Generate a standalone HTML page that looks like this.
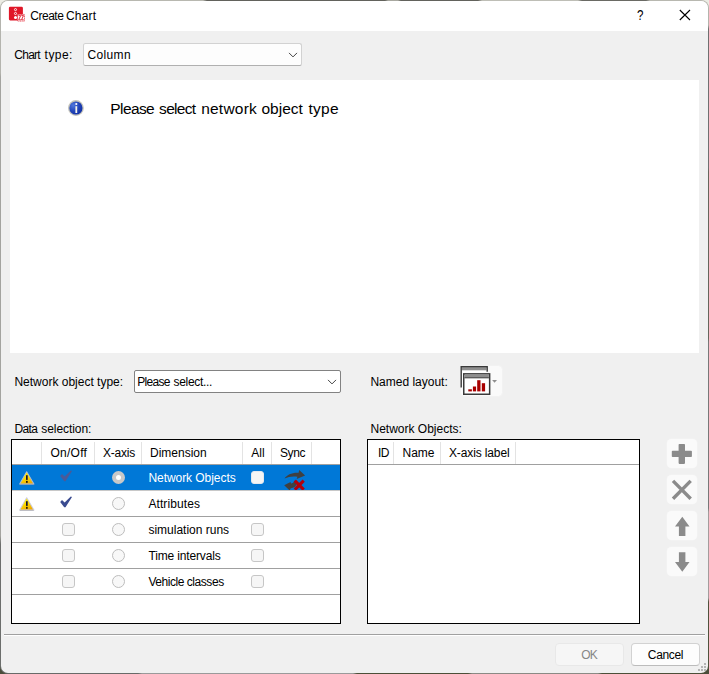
<!DOCTYPE html>
<html lang="en">
<head>
<meta charset="utf-8">
<title>Create Chart</title>
<style>
html,body{margin:0;padding:0;}
body{width:709px;height:674px;overflow:hidden;background:linear-gradient(#ecece4 0,#ecece4 40%,#5a5d52 60%,#4a4d3a 100%);font-family:"Liberation Sans",sans-serif;font-size:12px;color:#000;position:relative;}
.frame{position:absolute;left:0;top:0;width:709px;height:674px;border-radius:8px;overflow:hidden;
background:
linear-gradient(to right,#b8b8b0 0,#b8b8b0 203px,#62625c 207px,#62625c 385px,#a8a8a0 388px,#a8a8a0 398px,#62625c 401px,#62625c 478px,#bebeb6 482px,#bebeb6 578px,#6a6a64 582px,#6a6a64 646px,#b8b8b0 650px,#b8b8b0 709px) 0 0/100% 4px no-repeat,
linear-gradient(to right,#686a68 0,#686a68 138px,#9a9a9a 142px,#9a9a9a 353px,#4c4f38 357px,#4c4f38 468px,#8a8a84 472px,#8a8a84 598px,#4c4f38 602px,#4c4f38 709px) 0 100%/100% 4px no-repeat,
linear-gradient(to bottom,#b4b4ae 0,#b4b4ae 73px,#a4a4a0 77px,#a4a4a0 536px,#6c6e6c 544px,#6c6e6c 674px) 0 0/50% 100% no-repeat,
linear-gradient(to bottom,#b4b4ac 0,#b4b4ac 25px,#707070 29px,#707070 168px,#66665c 172px,#66665c 338px,#787878 342px,#787878 508px,#a49c9c 512px,#a49c9c 598px,#50523c 602px,#50523c 674px) 100% 0/50% 100% no-repeat;}
.win{position:absolute;left:1px;top:1px;width:707px;height:672px;border-radius:7px;background:#f0f0f0;overflow:hidden;}
.abs{position:absolute;}
.titlebar{position:absolute;left:0;top:0;width:707px;height:30px;background:#fff;}
.t{position:absolute;white-space:nowrap;line-height:14px;height:14px;}
.combo{position:absolute;background:#fdfdfd;border:1px solid #d2d2d2;border-bottom-color:#b0b0b0;border-radius:2.5px;box-sizing:border-box;}
.panel{position:absolute;left:9px;top:79px;width:689px;height:273px;background:#fff;}
.tbl{position:absolute;box-sizing:border-box;border:1px solid #000;background:#fff;overflow:hidden;}
.vl{position:absolute;width:1px;background:#e3e3e3;}
.hl{position:absolute;height:1px;background:#a0a0a0;left:0;}
.cb{position:absolute;width:11px;height:11px;border:1px solid #c6c6c6;border-radius:3px;background:#f6f6f6;}
.rb{position:absolute;width:11px;height:11px;border:1px solid #bdbdbd;border-radius:50%;background:#f8f8f8;}
.sbtn{position:absolute;left:666px;width:30px;height:29px;border-radius:4.5px;background:#fafafa;box-shadow:0 0 0 0.5px #f4f4f4;}
.btn{position:absolute;box-sizing:border-box;height:23px;border-radius:4px;text-align:center;line-height:21px;}
</style>
</head>
<body>
<div class="frame">
<div class="win">
  <div class="titlebar"></div>
  <!-- app icon -->
  <svg class="abs" style="left:7px;top:5px" width="18" height="17" viewBox="0 0 18 17">
    <rect x="0.9" y="0.8" width="14" height="13.6" rx="1.3" fill="#e01728"/>
    <circle cx="7.5" cy="3.6" r="1.05" fill="none" stroke="#fff" stroke-width="0.9"/>
    <circle cx="7.5" cy="7.5" r="1.05" fill="none" stroke="#fff" stroke-width="0.9"/>
    <circle cx="7.5" cy="11.4" r="1.5" fill="#fff"/>
    <rect x="9.6" y="8.4" width="6.9" height="6.7" fill="#fff" stroke="#e6404d" stroke-width="0.8" stroke-dasharray="1.2 0.5"/>
    <path d="M10.6 9.6h2.1l-2 4.2h2.2M13.4 9.6h2.1l-2 4.2h2.2" fill="none" stroke="#e01728" stroke-width="0.9"/>
  </svg>
  <div class="t" id="title" style="left:0;top:8px;width:120px;"><span class="abs" style="left:29.3px;letter-spacing:-0.5px">Create</span> <span class="abs" style="left:65px;letter-spacing:0.2px">Chart</span></div>
  <div class="t" id="q" style="left:636px;top:7.2px;font-size:14.5px;transform:scaleX(0.8);transform-origin:0 0;">?</div>
  <svg class="abs" style="left:678px;top:8px" width="12" height="12" viewBox="0 0 12 12"><path d="M0.8 1L11 11M11 1L0.8 11" stroke="#000" stroke-width="1.1" fill="none"/></svg>

  <div class="t" id="l1" style="left:0;top:47px;width:80px;"><span class="abs" style="left:13.3px;letter-spacing:-0.75px">Chart</span> <span class="abs" style="left:43.6px;letter-spacing:0.45px">type:</span></div>
  <div class="combo" style="left:82px;top:42px;width:219px;height:23px;"></div>
  <div class="t" id="c1" style="left:86.5px;top:47px;letter-spacing:0.35px;">Column</div>
  <svg class="abs" style="left:287px;top:51px" width="10" height="6" viewBox="0 0 10 6"><path d="M1 0.9L5 4.9L9 0.9" stroke="#444" stroke-width="1" fill="none"/></svg>

  <div class="panel"></div>
  <!-- info icon -->
  <svg class="abs" style="left:66px;top:98px" width="18" height="18" viewBox="0 0 18 18">
    <defs><radialGradient id="ig" cx="0.3" cy="0.3" r="0.9"><stop offset="0" stop-color="#5078dc"/><stop offset="0.5" stop-color="#2244b8"/><stop offset="1" stop-color="#0c2aa0"/></radialGradient></defs>
    <circle cx="8.9" cy="9" r="7.9" fill="#c2c2ba"/>
    <circle cx="8.9" cy="9" r="6.6" fill="url(#ig)"/>
    <circle cx="9.3" cy="5" r="1.1" fill="#fff"/>
    <rect x="8.4" y="7.2" width="1.8" height="6.8" fill="#f4f4ea"/>
  </svg>
  <div class="t" id="msg" style="left:0;top:98px;width:400px;font-size:15.5px;line-height:20px;height:20px;"><span class="abs" style="left:109.3px;letter-spacing:-0.6px">Please</span> <span class="abs" style="left:158.1px;letter-spacing:-0.7px">select</span> <span class="abs" style="left:200.2px;letter-spacing:0.22px">network</span> <span class="abs" style="left:260.5px;letter-spacing:0">object</span> <span class="abs" style="left:307.4px;letter-spacing:0.28px">type</span></div>

  <div class="t" id="l2" style="left:13.4px;top:374px;">Network object type:</div>
  <div class="combo" style="left:133px;top:369px;width:207px;height:23px;border-color:#828282;border-radius:2px;background:#fff;"></div>
  <div class="t" id="c2" style="left:0;top:374px;width:230px;"><span class="abs" style="left:136.2px;letter-spacing:-0.7px">Please</span> <span class="abs" style="left:172.6px;letter-spacing:-0.33px">select...</span></div>
  <svg class="abs" style="left:326px;top:378px" width="10" height="6" viewBox="0 0 10 6"><path d="M1 0.9L5 4.9L9 0.9" stroke="#444" stroke-width="1" fill="none"/></svg>

  <div class="t" id="l3" style="left:369.4px;top:374px;">Named layout:</div>
  <!-- named layout button -->
  <div class="abs" style="left:459px;top:364px;width:43px;height:32px;border-radius:4.5px;background:#fafafa;border:1px solid #f2f2f2;box-sizing:border-box;"></div>
  <svg class="abs" style="left:457px;top:364px" width="46" height="33" viewBox="0 0 46 33">
    <path d="M3.2 22.6V1.7H29.2V8.5H5V22.6Z" fill="#fff"/>
    <rect x="3.9" y="2.4" width="24.6" height="2.9" fill="#8e8e8e"/>
    <path d="M3.2 22.6V1.7H29.2V6.8" fill="none" stroke="#3a3a3a" stroke-width="1.4"/>
    <rect x="5.75" y="8.85" width="25.9" height="20.4" fill="#fff" stroke="#3a3a3a" stroke-width="1.5"/>
    <rect x="6.5" y="9.6" width="24.4" height="2.6" fill="#8e8e8e"/>
    <rect x="6.5" y="12.2" width="24.4" height="1.1" fill="#3a3a3a"/>
    <rect x="10.3" y="24.3" width="3.6" height="2.1" fill="#a80000"/>
    <rect x="14.9" y="21.5" width="3.2" height="4.9" fill="#a80000"/>
    <rect x="19.2" y="15.2" width="3.3" height="11.2" fill="#a80000"/>
    <rect x="23.8" y="18.2" width="3.3" height="8.2" fill="#a80000"/>
    <path d="M34.1 15H39L36.55 17.8Z" fill="#8e8e8e"/>
  </svg>

  <div class="t" id="l4" style="left:0;top:421px;width:100px;"><span class="abs" style="left:13.4px;letter-spacing:-0.6px">Data</span> <span class="abs" style="left:40.2px;letter-spacing:-0.05px">selection:</span></div>
  <div class="t" id="l5" style="left:369.5px;top:421px;">Network Objects:</div>

  <!-- data selection table -->
  <div class="tbl" id="tbl1" style="left:10px;top:438px;width:330px;height:185px;">
    <div class="vl" style="left:29px;top:2px;height:22px;"></div>
    <div class="vl" style="left:82px;top:2px;height:22px;"></div>
    <div class="vl" style="left:129px;top:2px;height:22px;"></div>
    <div class="vl" style="left:230px;top:2px;height:22px;"></div>
    <div class="vl" style="left:259px;top:2px;height:22px;"></div>
    <div class="vl" style="left:299px;top:2px;height:22px;"></div>
    <div class="hl" style="top:24px;width:328px;"></div>
    <div class="hl" style="top:50px;width:328px;background:#c8c8c8;"></div>
    <div class="hl" style="top:76px;width:328px;"></div>
    <div class="hl" style="top:102px;width:328px;"></div>
    <div class="hl" style="top:128px;width:328px;"></div>
    <div class="hl" style="top:154px;width:328px;"></div>
    <div class="abs" style="left:0;top:25px;width:328px;height:25px;background:#0078d7;"></div>
    <div class="t" id="h1" style="left:38.5px;top:6px;letter-spacing:0.25px;">On/Off</div>
    <div class="t" id="h2" style="left:91px;top:6px;letter-spacing:-0.2px;">X-axis</div>
    <div class="t" id="h3" style="left:138px;top:6px;">Dimension</div>
    <div class="t" id="h4" style="left:239.3px;top:6px;">All</div>
    <div class="t" id="h5" style="left:268px;top:6px;letter-spacing:-0.4px;">Sync</div>
    <div class="t" id="r1" style="left:136.4px;top:31px;color:#fff;letter-spacing:-0.05px;">Network Objects</div>
    <div class="t" id="r2" style="left:136.4px;top:57px;letter-spacing:0.1px;">Attributes</div>
    <div class="t" id="r3" style="left:136.4px;top:83px;">simulation runs</div>
    <div class="t" id="r4" style="left:136.4px;top:109px;letter-spacing:-0.15px;">Time intervals</div>
    <div class="t" id="r5" style="left:136.4px;top:135px;letter-spacing:-0.45px;">Vehicle classes</div>
    <!-- warning icons -->
    <svg class="abs" width="0" height="0"><defs><linearGradient id="wg" x1="0.3" y1="0" x2="0.7" y2="1"><stop offset="0" stop-color="#fff200"/><stop offset="0.5" stop-color="#fcd800"/><stop offset="1" stop-color="#f0a800"/></linearGradient></defs></svg>
    <svg class="abs" style="left:7px;top:30px" width="16" height="16" viewBox="0 0 16 16"><path d="M7.7 1.8L14.9 14H0.7Z" fill="#c6c6da" stroke="#c6c6da" stroke-width="1.1" stroke-linejoin="round" opacity="0.85"/><path d="M7.7 2.6L14 13.6H1.5Z" fill="url(#wg)"/><rect x="7" y="5.2" width="1.7" height="4.7" fill="#141430"/><rect x="7" y="10.9" width="1.7" height="1.9" fill="#2a1c00"/><path d="M0.8 14.4H14.8" stroke="#a4a4a8" stroke-width="0.9" opacity="0.75"/></svg>
    <svg class="abs" style="left:7px;top:56px" width="16" height="16" viewBox="0 0 16 16"><path d="M7.7 1.8L14.9 14H0.7Z" fill="#c6c6da" stroke="#c6c6da" stroke-width="1.1" stroke-linejoin="round" opacity="0.85"/><path d="M7.7 2.6L14 13.6H1.5Z" fill="url(#wg)"/><rect x="7" y="5.2" width="1.7" height="4.7" fill="#141430"/><rect x="7" y="10.9" width="1.7" height="1.9" fill="#2a1c00"/><path d="M0.8 14.4H14.8" stroke="#a4a4a8" stroke-width="0.9" opacity="0.75"/></svg>
    <!-- checkmarks -->
    <svg class="abs" style="left:48px;top:30px" width="13" height="12" viewBox="0 0 13 12"><path d="M0.2 5.9L2 3.9L4.6 6.5L10.8 0.6L12 0.9L5.5 11.3H4.2Z" fill="#4a5a98"/></svg>
    <svg class="abs" style="left:48px;top:56px" width="13" height="12" viewBox="0 0 13 12"><path d="M0.2 5.9L2 3.9L4.6 6.5L10.8 0.6L12 0.9L5.5 11.3H4.2Z" fill="#3a4b90"/></svg>
    <!-- radio -->
    <div class="rb" style="left:100px;top:31px;background:#fff;border:4px solid #c8c8c8;width:5px;height:5px;"></div>
    <div class="rb" style="left:100px;top:57px;"></div>
    <div class="rb" style="left:100px;top:83px;"></div>
    <div class="rb" style="left:100px;top:109px;"></div>
    <div class="rb" style="left:100px;top:135px;"></div>
    <!-- checkboxes col1 -->
    <div class="cb" style="left:50px;top:83px;"></div>
    <div class="cb" style="left:50px;top:109px;"></div>
    <div class="cb" style="left:50px;top:135px;"></div>
    <!-- checkboxes All -->
    <div class="cb" style="left:239px;top:31px;background:#f5f5f5;border-color:#e4e8ee;"></div>
    <div class="cb" style="left:239px;top:83px;"></div>
    <div class="cb" style="left:239px;top:109px;"></div>
    <div class="cb" style="left:239px;top:135px;"></div>
    <!-- sync icon -->
    <svg class="abs" style="left:270px;top:28px" width="26" height="22" viewBox="0 0 26 22">
      <path d="M2.5 10.5C5 6.8 10 4.4 16.6 4.8L17.2 2.1L23.1 7.4L14.7 11L15.4 8.8C11 8 6.5 8.7 2.5 10.5Z" fill="#404040"/>
      <path d="M2.2 17.3L8.5 13.9L9 15.6C10.5 15.6 11.8 14.6 12.6 12.6L15 15C14.5 18 12 20 8.8 20.3L7.6 22.4Z" fill="#404040"/>
      <path d="M12.8 12.7L21.7 21.6M21.7 12.7L12.8 21.6" stroke="#b2000b" stroke-width="3.2" fill="none"/>
    </svg>
  </div>

  <!-- network objects table -->
  <div class="tbl" id="tbl2" style="left:366px;top:438px;width:273px;height:185px;">
    <div class="vl" style="left:25px;top:2px;height:22px;"></div>
    <div class="vl" style="left:72px;top:2px;height:22px;"></div>
    <div class="vl" style="left:147px;top:2px;height:22px;"></div>
    <div class="hl" style="top:24px;width:271px;"></div>
    <div class="t" id="g1" style="left:10px;top:6px;letter-spacing:-0.5px;">ID</div>
    <div class="t" id="g2" style="left:34.5px;top:6px;">Name</div>
    <div class="t" id="g3" style="left:81px;top:6px;letter-spacing:-0.13px;">X-axis label</div>
  </div>

  <!-- side buttons -->
  <div class="sbtn" style="top:438px;"></div>
  <div class="sbtn" style="top:474px;"></div>
  <div class="sbtn" style="top:510px;"></div>
  <div class="sbtn" style="top:546px;"></div>
  <svg class="abs" style="left:669px;top:441px" width="24" height="24" viewBox="0 0 24 24"><path d="M9.4 1.9H14.2Q15 1.9 15 2.7V8.7H21.1Q21.9 8.7 21.9 9.5V14.3Q21.9 15.1 21.1 15.1H15V21.1Q15 21.9 14.2 21.9H9.4Q8.6 21.9 8.6 21.1V15.1H2.6Q1.8 15.1 1.8 14.3V9.5Q1.8 8.7 2.6 8.7H8.6V2.7Q8.6 1.9 9.4 1.9Z" fill="#8b8b8b"/></svg>
  <svg class="abs" style="left:669px;top:477px" width="24" height="24" viewBox="0 0 24 24"><path d="M3 2.9L20.7 20.8M20.7 2.9L3 20.8" stroke="#8b8b8b" stroke-width="3.4" fill="none"/></svg>
  <svg class="abs" style="left:669px;top:513px" width="24" height="24" viewBox="0 0 24 24"><path d="M12.3 2.7L19.5 12.6H15.4V21.9H8.9V12.6H5Z" fill="#8b8b8b"/></svg>
  <svg class="abs" style="left:669px;top:549px" width="24" height="24" viewBox="0 0 24 24"><path d="M12.3 21.7L19.5 12H15.4V2.2H8.9V12H5Z" fill="#8b8b8b"/></svg>

  <div class="abs" style="left:3px;top:633px;width:701px;height:1px;background:#a0a0a0;"></div>
  <div class="abs" style="left:3px;top:634px;width:701px;height:1px;background:#fff;"></div>

  <div class="btn" id="ok" style="left:554px;top:642px;width:69px;height:23px;line-height:23px;background:#f6f6f6;border:1px solid #e8e8e8;color:#868686;letter-spacing:-0.9px;text-indent:-1px;">OK</div>
  <div class="btn" id="cancel" style="left:630px;top:642px;width:69px;height:23px;line-height:23px;background:#fdfdfd;border:1px solid #d2d2d2;border-bottom-color:#bcbcbc;letter-spacing:-0.35px;">Cancel</div>
  <!-- size grip -->
  <svg class="abs" style="left:696px;top:661px" width="10" height="10" viewBox="0 0 10 10" fill="#b4b4b4"><rect x="7" y="1" width="2" height="2"/><rect x="4" y="4" width="2" height="2"/><rect x="7" y="4" width="2" height="2"/><rect x="1" y="7" width="2" height="2"/><rect x="4" y="7" width="2" height="2"/><rect x="7" y="7" width="2" height="2"/></svg>
</div>
</div>
</body>
</html>
